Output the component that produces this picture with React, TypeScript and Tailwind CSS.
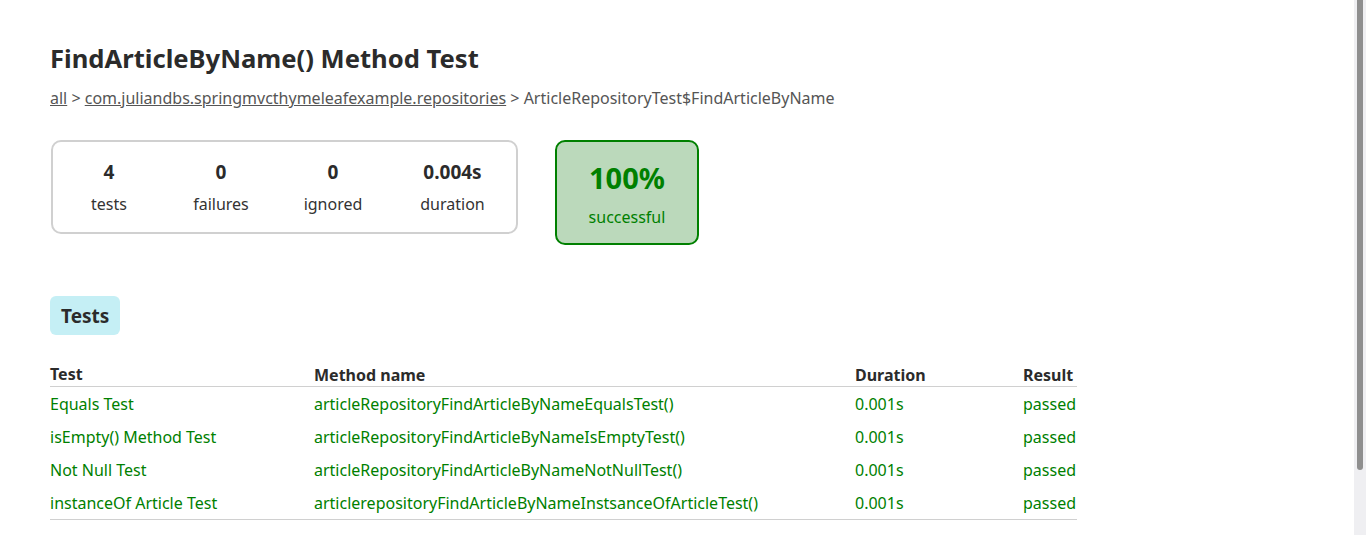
import React from "react";

const rows = [
  ["Equals Test", "articleRepositoryFindArticleByNameEqualsTest()"],
  ["isEmpty() Method Test", "articleRepositoryFindArticleByNameIsEmptyTest()"],
  ["Not Null Test", "articleRepositoryFindArticleByNameNotNullTest()"],
  ["instanceOf Article Test", "articlerepositoryFindArticleByNameInstsanceOfArticleTest()"],
];

export default function App() {
  return (
    <div className="relative min-h-[535px] w-full overflow-hidden bg-white text-[#333] [font-family:'Noto_Sans',sans-serif]">
      <div className="pl-[50px] pt-[43px]">
        <h1 className="text-[25.6px] font-bold leading-[32px] text-[#2b2b2b]">FindArticleByName() Method Test</h1>
        <div className="mt-[12px] text-[16px] leading-[22px] text-[#555]">
          <a className="underline">all</a> &gt; <a className="underline">com.juliandbs.springmvcthymeleafexample.repositories</a> &gt; ArticleRepositoryTest$FindArticleByName
        </div>
        <div className="mt-[31px] flex items-start gap-[37px]">
          <div className="ml-[1px] flex h-[94px] rounded-[10px] border-2 border-[#d0d0d0]">
            {[
              ["4", "tests", "w-[112px]"],
              ["0", "failures", "w-[112px]"],
              ["0", "ignored", "w-[112px]"],
              ["0.004s", "duration", "w-[127px]"],
            ].map(([n, l, w]) => (
              <div key={l} className={`${w} flex flex-col items-center pt-[17px]`}>
                <div className="text-[19px] font-bold leading-[26px] text-[#2b2b2b]">{n}</div>
                <div className="mt-[8px] text-[16px] leading-[22px] text-[#333]">{l}</div>
              </div>
            ))}
          </div>
          <div className="flex h-[105px] w-[144px] flex-col items-center rounded-[10px] border-2 border-[#008000] bg-[#bbd9bb] pt-[17px] text-[#008000]">
            <div className="text-[29px] font-bold leading-[38px]">100%</div>
            <div className="mt-[9px] text-[16px] leading-[22px]">successful</div>
          </div>
        </div>
        <div className="mt-[51px]">
          <div className="inline-flex h-[39px] items-center rounded-[6px] bg-[#c5eff5] px-[11px] pt-[1px] text-[19px] font-bold text-[#2b2b2b]">Tests</div>
        </div>
        <table className="mt-[28px] w-[1027px] border-collapse text-[16px]">
          <thead>
            <tr className="border-b border-[#d0d0d0]">
              <th className="w-[264px] p-0 pb-[1px] text-left font-bold leading-[22px] text-[#2b2b2b]">Test</th>
              <th className="w-[541px] p-0 text-left font-bold leading-[22px] text-[#2b2b2b]">Method name</th>
              <th className="w-[168px] p-0 text-left font-bold leading-[22px] text-[#2b2b2b]">Duration</th>
              <th className="p-0 text-left font-bold leading-[22px] text-[#2b2b2b]">Result</th>
            </tr>
          </thead>
          <tbody className="border-b border-[#d0d0d0]">
            {rows.map(([t, m], i) => (
              <tr key={t} className={i === 0 ? "h-[34px] text-[#008000]" : "h-[33px] text-[#008000]"}>
                <td className={i === 0 ? "p-0 pt-[1px] leading-[22px]" : "p-0 leading-[22px]"}>{t}</td>
                <td className={i === 0 ? "p-0 pt-[1px] leading-[22px]" : "p-0 leading-[22px]"}>{m}</td>
                <td className={i === 0 ? "p-0 pt-[1px] leading-[22px]" : "p-0 leading-[22px]"}>0.001s</td>
                <td className={i === 0 ? "p-0 pt-[1px] leading-[22px]" : "p-0 leading-[22px]"}>passed</td>
              </tr>
            ))}
          </tbody>
        </table>
      </div>
      <div className="absolute right-0 top-0 h-[535px] w-[12px] bg-[#efeff2]">
        <div className="ml-[3px] h-[470px] w-[6px] rounded-b-[3px] bg-[#8f8f8f]" />
      </div>
    </div>
  );
}
